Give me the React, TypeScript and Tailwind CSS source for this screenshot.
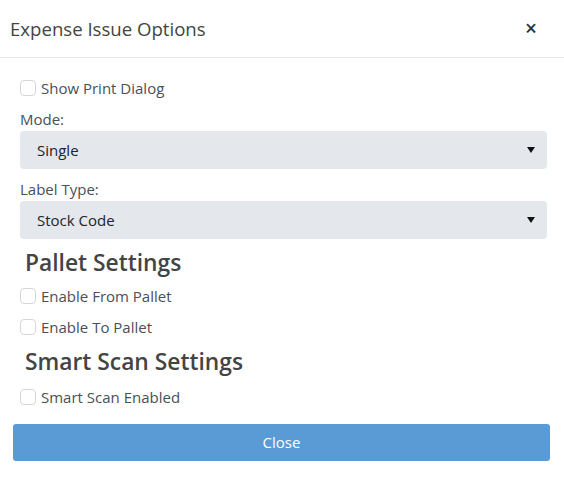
const font = { fontFamily: '"Open Sans", "Noto Sans", sans-serif' }

function Check({ label, className = '' }: { label: string; className?: string }) {
  return (
    <label className={`flex h-[22px] items-center text-[15px] text-[#495057] ${className}`}>
      <span className="h-[16px] w-[16px] rounded-[4px] border border-[#d3d6da] bg-white" />
      <span className="ml-[5px]">{label}</span>
    </label>
  )
}

function Select({ value, className = '' }: { value: string; className?: string }) {
  return (
    <div
      className={`flex h-[38px] items-center justify-between rounded-[4px] bg-[#e4e7eb] pl-[17px] pr-[12px] text-[15px] text-[#212529] ${className}`}
    >
      <span>{value}</span>
      <svg width="8" height="6" viewBox="0 0 8 6">
        <path d="M0 0h8L4 6z" fill="#111" />
      </svg>
    </div>
  )
}

export default function App() {
  return (
    <div className="h-[483px] w-[564px] bg-white" style={font}>
      {/* Header */}
      <div className="flex h-[58px] items-center justify-between border-b border-[#e6e6e6] pl-[10px] pr-[27px]">
        <h5 className="text-[18.6px] text-[#444]">Expense Issue Options</h5>
        <button className="text-[21px] font-semibold leading-none text-[#333]">×</button>
      </div>

      {/* Body */}
      <div className="flex flex-col pl-[20px] pr-[17px] pt-[19px]">
        <Check label="Show Print Dialog" />
        <div className="mt-[10px] flex h-[20px] items-center text-[15px] text-[#495057]">Mode:</div>
        <Select value="Single" className="mt-[2px]" />
        <div className="mt-[10px] flex h-[20px] items-center text-[15px] text-[#495057]">Label Type:</div>
        <Select value="Stock Code" className="mt-[2px]" />
        <h4 className="mt-[9px] flex h-[30px] items-center pl-[5px] text-[22.8px] font-semibold text-[#444]">
          Pallet Settings
        </h4>
        <Check label="Enable From Pallet" className="mt-[7px]" />
        <Check label="Enable To Pallet" className="mt-[9px]" />
        <h4 className="mt-[9px] flex h-[30px] items-center pl-[5px] text-[22.8px] font-semibold text-[#444]">
          Smart Scan Settings
        </h4>
        <Check label="Smart Scan Enabled" className="mt-[9px]" />
      </div>

      {/* Footer */}
      <div className="pl-[13px] pr-[14px] pt-[16px]">
        <button className="flex h-[37px] w-full items-center justify-center rounded-[3px] bg-[#5b9bd5] text-[15px] text-white">
          Close
        </button>
      </div>
    </div>
  )
}
